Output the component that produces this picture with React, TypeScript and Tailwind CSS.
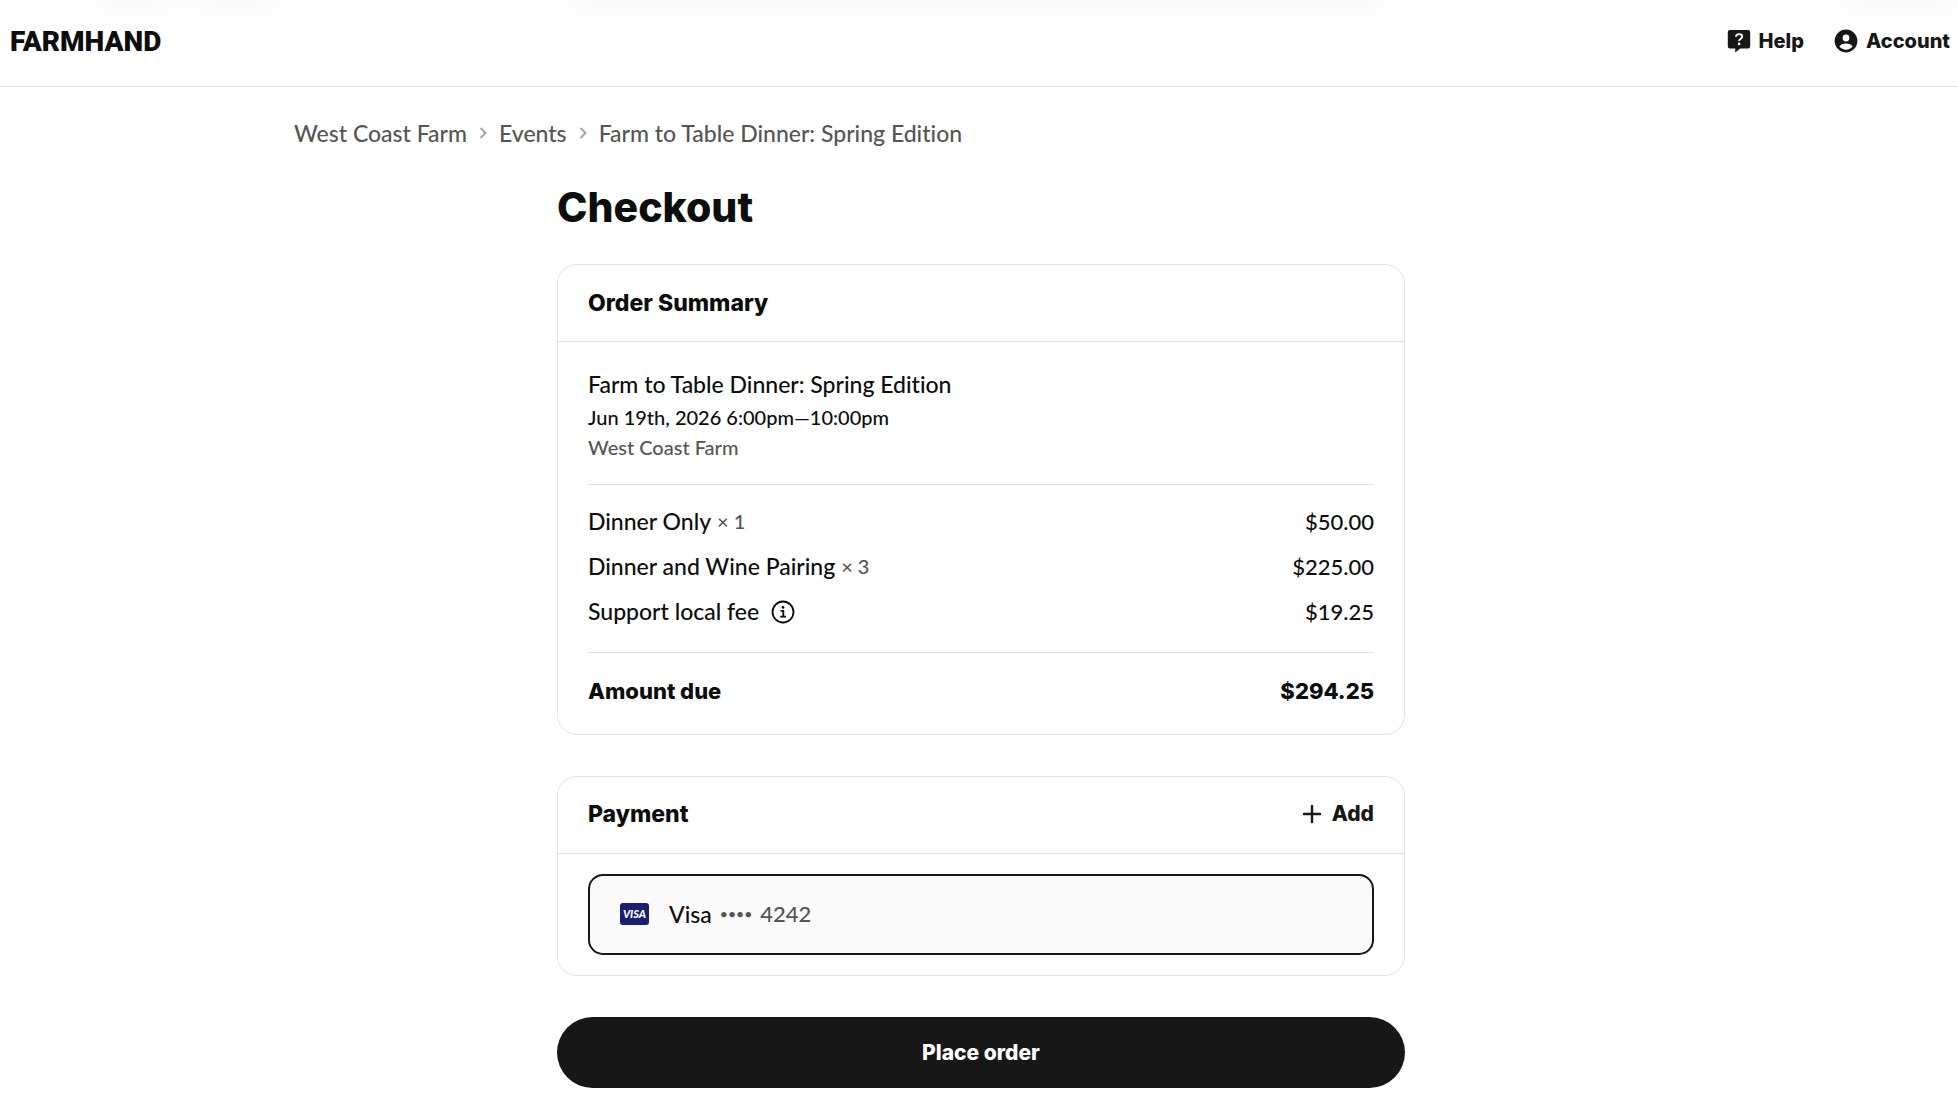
import React from 'react';

interface LineItem {
  name: string;
  quantity?: number;
  amount: string;
  hasInfo?: boolean;
}

const LINE_ITEMS: LineItem[] = [
  { name: 'Dinner Only', quantity: 1, amount: '$50.00' },
  { name: 'Dinner and Wine Pairing', quantity: 3, amount: '$225.00' },
  { name: 'Support local fee', amount: '$19.25', hasInfo: true },
];

const HelpIcon = () => (
  <svg className="w-6 h-6" viewBox="0 0 24 24" aria-hidden="true">
    <path d="M3 1h18a2.200 2.200 0 0 1 2.200 2.200v14a2.200 2.200 0 0 1-2.200 2.200h-7.800L8.200 23.600v-4.200H3a2.200 2.200 0 0 1-2.200-2.200v-14A2.200 2.200 0 0 1 3 1z" fill="#171717" />
    <path d="M9 7.700C9 6 10.300 5.100 12.100 5.100c1.900 0 3.200 1 3.200 2.500 0 2.200-3.200 2-3.200 4.300" fill="none" stroke="#fff" strokeWidth="1.900" />
    <circle cx="12.100" cy="14.900" r="1.300" fill="#fff" />
  </svg>
);

const AccountIcon = () => (
  <svg className="w-6 h-6" viewBox="0 0 24 24" aria-hidden="true">
    <circle cx="12" cy="12" r="11.400" fill="#171717" />
    <circle cx="12" cy="9" r="3.400" fill="#fff" />
    <path d="M5.400 17.600c1-2 3.600-3.200 6.600-3.200s5.600 1.200 6.600 3.200c-1.500 2-3.900 3.200-6.600 3.200s-5.100-1.200-6.600-3.200z" fill="#fff" />
  </svg>
);

const InfoIcon = () => (
  <svg className="w-6 h-6" viewBox="0 0 24 24" fill="none" stroke="#0d0d0d" aria-hidden="true">
    <circle cx="12" cy="12" r="10.500" strokeWidth="1.800" />
    <path d="M9.600 10.900h2.700v5M9.200 16.600h5.800" strokeWidth="1.800" />
    <circle cx="12" cy="7.400" r="1.400" fill="#0d0d0d" stroke="none" />
  </svg>
);

const PlusIcon = () => (
  <svg className="w-5 h-5" viewBox="0 0 20 20" fill="none" stroke="#171717" strokeWidth="2.400" strokeLinecap="round" aria-hidden="true">
    <path d="M10 2v16M2 10h16" />
  </svg>
);

const ChevronIcon = () => (
  <svg className="w-2 h-3" viewBox="0 0 8 12" fill="none" stroke="#a3a3a3" strokeWidth="2" aria-hidden="true">
    <path d="M1.500 1l5 5-5 5" />
  </svg>
);

const VisaBadge = () => (
  <span className="flex items-center justify-center w-[29px] h-[22px] rounded-[3px] bg-[#191e6e] text-white text-[11px] leading-none font-black italic" aria-hidden="true">
    VISA
  </span>
);

const Header = () => (
  <header className="relative overflow-hidden border-b border-[#e2e2e2] bg-white">
    {/* Soft shadows cast from above the bar */}
    <div className="absolute inset-x-0 bottom-full h-5 pointer-events-none" aria-hidden="true">
      <div className="absolute left-[90px] w-[86px] h-3 rounded-full shadow-[0_8px_36px_rgba(0,0,0,0.09)]"></div>
      <div className="absolute left-[190px] w-[90px] h-3 rounded-full shadow-[0_8px_36px_rgba(0,0,0,0.09)]"></div>
      <div className="absolute left-[29%] right-[29%] h-3 rounded-full shadow-[0_8px_36px_rgba(0,0,0,0.09)]"></div>
      <div className="absolute left-[94%] right-0 h-3 shadow-[0_8px_36px_rgba(0,0,0,0.09)]"></div>
    </div>
    <div className="relative flex items-center justify-between h-[86px] pl-2.5 pr-2 pb-0.5">
      <a href="#" className="font-['Roboto'] font-black text-[28px] leading-8">FARMHAND</a>
      <nav className="flex items-center gap-[30px] pb-0.5 font-['Inter'] text-[20px] leading-8 font-extrabold text-[#171717]">
        <a href="#" className="flex items-center gap-2">
          <HelpIcon /> Help
        </a>
        <a href="#" className="flex items-center gap-2">
          <AccountIcon /> Account
        </a>
      </nav>
    </div>
  </header>
);

const Breadcrumbs = () => (
  <nav aria-label="Breadcrumb" className="flex items-center gap-3 text-[23px] leading-8 font-medium text-[#555]">
    <a href="#">West Coast Farm</a>
    <ChevronIcon />
    <a href="#">Events</a>
    <ChevronIcon />
    <a href="#">Farm to Table Dinner: Spring Edition</a>
  </nav>
);

const OrderSummary = () => (
  <section className="border border-[#e2e2e2] rounded-[20px]">
    <div className="flex items-center h-[77px] px-[30px] border-b border-[#e2e2e2]">
      <h2 className="font-['Inter'] text-[23px] leading-8 font-extrabold">Order Summary</h2>
    </div>
    <div className="px-[30px] font-medium">
      <div className="pt-6 pb-[22px] border-b border-[#e2e2e2]">
        <p className="text-[23px] leading-9">Farm to Table Dinner: Spring Edition</p>
        <p className="text-[20px] leading-[30px]">Jun 19th, 2026 6:00pm—10:00pm</p>
        <p className="text-[20px] leading-[30px] text-[#555]">West Coast Farm</p>
      </div>
      <div className="pt-3.5 pb-[18px] border-b border-[#e2e2e2]">
        <table className="w-full text-[22px] leading-[29px]">
          <tbody>
            {LINE_ITEMS.map((item) => (
              <tr key={item.name}>
                <th scope="row" className="py-2 text-left text-[23px] font-medium">
                  <span className="flex items-center">
                    {item.name}
                    {item.quantity && <span className="pl-1.5 text-[20px] text-[#555]">× {item.quantity}</span>}
                    {item.hasInfo && (
                      <button type="button" aria-label="About the support local fee" className="ml-3">
                        <InfoIcon />
                      </button>
                    )}
                  </span>
                </th>
                <td className="py-2 text-right">{item.amount}</td>
              </tr>
            ))}
          </tbody>
        </table>
      </div>
      <div className="flex items-center justify-between h-[81px] pb-1.5 font-['Inter'] text-[22px] leading-8 font-extrabold">
        <span>Amount due</span>
        <span>$294.25</span>
      </div>
    </div>
  </section>
);

const Payment = () => (
  <section className="border border-[#e2e2e2] rounded-[20px]">
    <div className="flex items-center justify-between h-[77px] px-[30px] pb-0.5 border-b border-[#e2e2e2]">
      <h2 className="font-['Inter'] text-[23px] leading-8 font-extrabold">Payment</h2>
      <button type="button" className="flex items-center gap-2.5 font-['Inter'] text-[21px] leading-8 font-extrabold text-[#171717]">
        <PlusIcon /> Add
      </button>
    </div>
    <div className="px-[30px] py-5">
      <label className="flex items-center h-[81px] px-[30px] pb-0.5 border-[2px] border-[#171717] rounded-[15px] bg-[#fafafa] text-[23px] leading-8 font-medium">
        <input type="radio" name="payment-method" defaultChecked className="sr-only" />
        <VisaBadge />
        <span className="pl-5">Visa</span>
        <span className="flex items-center gap-2 pl-2 text-[22px] text-[#555]">
          <span className="text-sm">••••</span>
          4242
        </span>
      </label>
    </div>
  </section>
);

const App: React.FC = () => {
  return (
    <div className="min-h-screen bg-white text-[#0d0d0d] font-['Lato','Liberation_Sans',sans-serif] [font-variant-ligatures:none]">
      <Header />
      <main className="pl-1 pt-[30px] pb-7">
        <div className="max-w-[1374px] mx-auto">
          <Breadcrumbs />
          <div className="max-w-[848px] mx-auto pt-8">
            <h1 className="font-['Inter'] text-[41px] leading-[52px] font-extrabold">Checkout</h1>
            <div className="flex flex-col gap-[41px] pt-[31px]">
              <OrderSummary />
              <Payment />
              <button type="button" className="h-[71px] rounded-full bg-[#171717] text-white font-['Inter'] text-[21px] leading-8 font-extrabold">
                Place order
              </button>
            </div>
          </div>
        </div>
      </main>
    </div>
  );
};

export default App;
